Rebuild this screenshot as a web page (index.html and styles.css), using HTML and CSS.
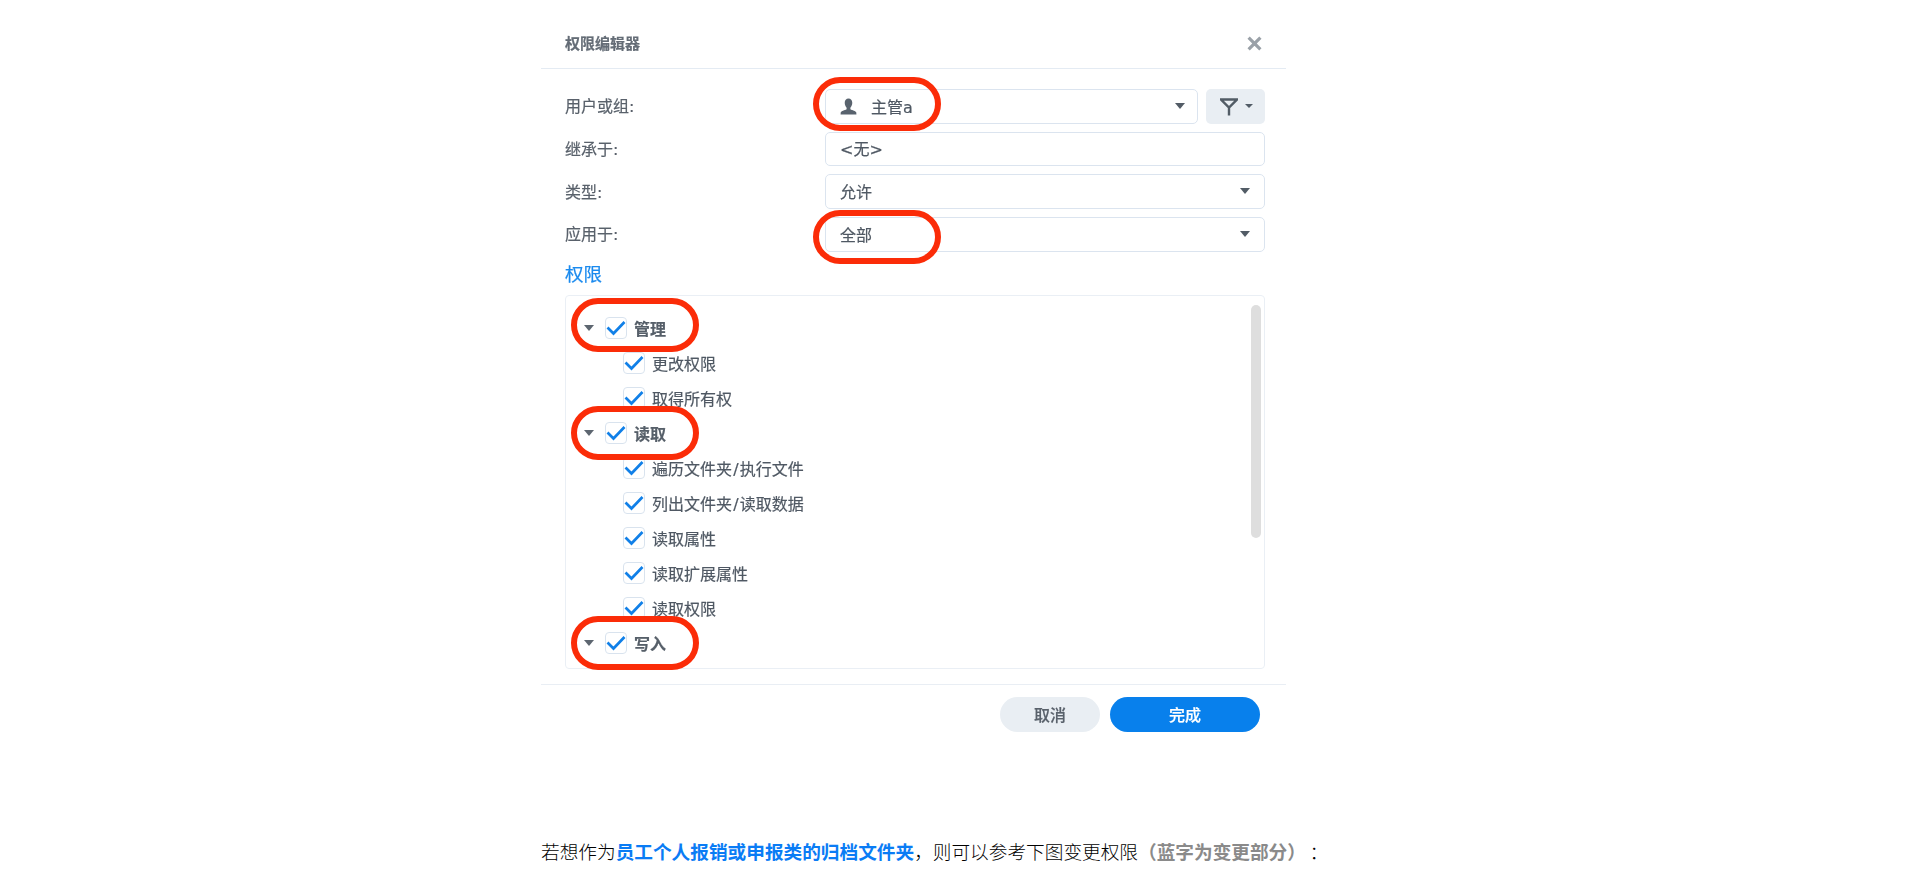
FILE: index.html
```html
<!DOCTYPE html>
<html lang="zh-CN">
<head>
<meta charset="utf-8">
<title>权限编辑器</title>
<link rel="stylesheet" href="styles.css">
</head>
<body>
<main class="page">
  <figure class="dialog">
    <header class="dialog-head">
      <span class="dialog-title">权限编辑器</span>
      <svg class="close" viewBox="0 0 14 14"><path d="M1.5 1.5L12.5 12.5M12.5 1.5L1.5 12.5"/></svg>
    </header>
    <div class="form">
      <label class="label">用户或组:</label>
      <div class="field-pair">
        <div class="field field-grow">
          <svg class="user" viewBox="0 0 18 18"><path d="M9 0.5C6.6 0.5 5 2.4 5 5c0 2.1 0.9 4 2 5.2v1.6C5 13 1.2 13.4 0.8 15.2L0.6 17.5h16.8l-0.2-2.3c-0.4-1.8-4.2-2.2-6.2-3.4v-1.6C12.1 9 13 7.1 13 5c0-2.6-1.6-4.5-4-4.5z"/></svg>
          <span class="field-text">主管a</span>
          <i class="caret caret-end"></i>
        </div>
        <div class="filter-btn">
          <svg class="funnel" viewBox="0 0 18 18"><path d="M1 1.5H17L9 9.5ZM9 9.5V17.5"/></svg>
          <i class="caret caret-small"></i>
        </div>
      </div>
      <label class="label">继承于:</label>
      <div class="field"><span>&lt;无&gt;</span></div>
      <label class="label">类型:</label>
      <div class="field"><span>允许</span><i class="caret caret-end"></i></div>
      <label class="label">应用于:</label>
      <div class="field"><span>全部</span><i class="caret caret-end"></i></div>
    </div>
    <h2 class="section">权限</h2>
    <div class="tree">
      <div class="row row-group"><i class="caret"></i><span class="check"><svg viewBox="0 0 22 22"><path d="M2.5 10.5L8.5 16.5L19.5 5"/></svg></span><b>管理</b></div>
      <div class="row row-child"><span class="check"><svg viewBox="0 0 22 22"><path d="M2.5 10.5L8.5 16.5L19.5 5"/></svg></span><span>更改权限</span></div>
      <div class="row row-child"><span class="check"><svg viewBox="0 0 22 22"><path d="M2.5 10.5L8.5 16.5L19.5 5"/></svg></span><span>取得所有权</span></div>
      <div class="row row-group"><i class="caret"></i><span class="check"><svg viewBox="0 0 22 22"><path d="M2.5 10.5L8.5 16.5L19.5 5"/></svg></span><b>读取</b></div>
      <div class="row row-child"><span class="check"><svg viewBox="0 0 22 22"><path d="M2.5 10.5L8.5 16.5L19.5 5"/></svg></span><span>遍历文件夹<span class="slash">/</span>执行文件</span></div>
      <div class="row row-child"><span class="check"><svg viewBox="0 0 22 22"><path d="M2.5 10.5L8.5 16.5L19.5 5"/></svg></span><span>列出文件夹<span class="slash">/</span>读取数据</span></div>
      <div class="row row-child"><span class="check"><svg viewBox="0 0 22 22"><path d="M2.5 10.5L8.5 16.5L19.5 5"/></svg></span><span>读取属性</span></div>
      <div class="row row-child"><span class="check"><svg viewBox="0 0 22 22"><path d="M2.5 10.5L8.5 16.5L19.5 5"/></svg></span><span>读取扩展属性</span></div>
      <div class="row row-child"><span class="check"><svg viewBox="0 0 22 22"><path d="M2.5 10.5L8.5 16.5L19.5 5"/></svg></span><span>读取权限</span></div>
      <div class="row row-group"><i class="caret"></i><span class="check"><svg viewBox="0 0 22 22"><path d="M2.5 10.5L8.5 16.5L19.5 5"/></svg></span><b>写入</b></div>
      <div class="scrollbar"></div>
    </div>
    <footer class="dialog-foot">
      <span class="btn btn-cancel">取消</span>
      <span class="btn btn-done">完成</span>
    </footer>
    <div class="mark mark-user"></div>
    <div class="mark mark-apply"></div>
    <div class="mark mark-manage"></div>
    <div class="mark mark-read"></div>
    <div class="mark mark-write"></div>
  </figure>
  <p class="note">若想作为<strong class="blue">员工个人报销或申报类的归档文件夹</strong>，则可以参考下图变更权限<strong class="grey">（蓝字为变更部分）</strong><span class="colon">：</span></p>
</main>
</body>
</html>
```
FILE: styles.css
```css
* { box-sizing: border-box; }
html, body { margin: 0; padding: 0; background: #fff; }
body { font-family: "Noto Sans CJK SC", "Noto Sans", sans-serif; overflow: hidden; }
.page { width: 831px; margin: 0 auto; }

.dialog {
  position: relative;
  width: 745px;
  margin: 0;
  height: 732px;
  font-family: "DejaVu Sans", "Noto Sans CJK SC", sans-serif;
  color: #4f5863;
  font-size: 16px;
  -webkit-text-stroke: 0.2px currentColor;
  filter: blur(0.45px);
}
.dialog-head {
  height: 69px;
  padding: 19px 25px 0 24px;
  display: flex;
  align-items: center;
  justify-content: space-between;
  border-bottom: 1px solid #e4ebf3;
}
.dialog-title { font-size: 15px; font-weight: 700; color: #646c76; line-height: 50px; }
.close { width: 15px; height: 15px; margin-right: -1px; }
.close path { fill: none; stroke: #9aa1a8; stroke-width: 3; }

.form {
  display: grid;
  grid-template-columns: 260px 1fr;
  grid-auto-rows: 34.67px;
  row-gap: 8px;
  padding: 20px 21px 0 24px;
}
.label { display: flex; align-items: center; padding-bottom: 2px; color: #59616b; }
.field-pair { display: flex; gap: 8px; }
.field {
  display: flex;
  align-items: center;
  padding: 0 14px 1px;
  border: 1.5px solid #dbe4ef;
  border-radius: 5px;
  background: #fff;
}
.field-grow { flex: 1; padding-right: 12px; }
.field-text { margin-left: 14px; }
.user { width: 17px; height: 17px; margin-top: 2px; fill: #59636e; stroke: none; }
.caret {
  display: block;
  width: 0;
  height: 0;
  border-left: 5.5px solid transparent;
  border-right: 5.5px solid transparent;
  border-top: 6px solid #525c66;
}
.caret-end { margin-left: auto; }
.caret-small {
  border-left-width: 4px;
  border-right-width: 4px;
  border-top-width: 4px;
}
.filter-btn {
  width: 59px;
  display: flex;
  align-items: center;
  justify-content: flex-start;
  gap: 7px;
  padding-left: 14px;
  background: #e9eef3;
  border-radius: 5px;
}
.funnel { width: 18px; height: 18px; margin-top: 2px; }
.funnel path { fill: none; stroke: #525c66; stroke-width: 2.4; }

.section {
  margin: 0;
  height: 43px;
  padding: 8px 0 0 24px;
  font-size: 18.5px;
  font-weight: 400;
  line-height: 30px;
  color: #1a8aee;
}
.tree {
  position: relative;
  width: 700px;
  height: 374px;
  margin-left: 24px;
  padding-top: 15px;
  border: 1px solid #eaeff5;
  border-radius: 4px;
  overflow: hidden;
}
.row { display: flex; align-items: center; height: 35px; gap: 7px; white-space: nowrap; }
.row > span:last-child, .row > b { margin-top: -1px; }
.slash { margin: 0 1.2px; }
.row-group { padding-left: 18px; }
.row-group .caret { margin-right: 4px; border-top-color: #5d6670; }
.row-group b { font-weight: 700; color: #565f69; }
.row-child { padding-left: 57px; }
.check {
  display: block;
  width: 22px;
  height: 22px;
  border: 1.5px solid #d9e3ee;
  border-radius: 4px;
  background: #fff;
  flex: none;
}
.check svg { display: block; width: 22px; height: 22px; margin: -1.5px; overflow: visible; }
.check path { fill: none; stroke: #1180e8; stroke-width: 2.7; }
.scrollbar {
  position: absolute;
  top: 9px;
  right: 3px;
  width: 10px;
  height: 233px;
  border-radius: 5px;
  background: #dedede;
}

.dialog-foot {
  display: flex;
  justify-content: flex-end;
  gap: 10px;
  margin-top: 15px;
  padding: 12px 26px 0 0;
  border-top: 1.5px solid #e9eef4;
}
.btn {
  display: flex;
  align-items: center;
  justify-content: center;
  height: 35px;
  padding-bottom: 1px;
  border-radius: 18px;
  font-weight: 500;
}
.btn-cancel { width: 100px; background: #e9eef3; color: #59616b; }
.btn-done { width: 150px; background: #0880ec; color: #fff; }

.mark {
  position: absolute;
  width: 128px;
  height: 54px;
  border: 6px solid #fb2c08;
  border-radius: 27px;
}
.mark-user { left: 272px; top: 77px; }
.mark-apply { left: 272px; top: 210px; }
.mark-manage { left: 30px; top: 298px; }
.mark-read { left: 30px; top: 406px; }
.mark-write { left: 30px; top: 616px; }

.note {
  margin: 105px 0 0;
  font-size: 18.67px;
  font-weight: 300;
  line-height: 28px;
  color: #000;
  white-space: nowrap;
  text-spacing-trim: space-all;
}
.blue { color: #0a7cf5; font-weight: 700; }
.grey { color: #8a8a8a; font-weight: 700; }
.colon { margin-left: 3.5px; }
```
